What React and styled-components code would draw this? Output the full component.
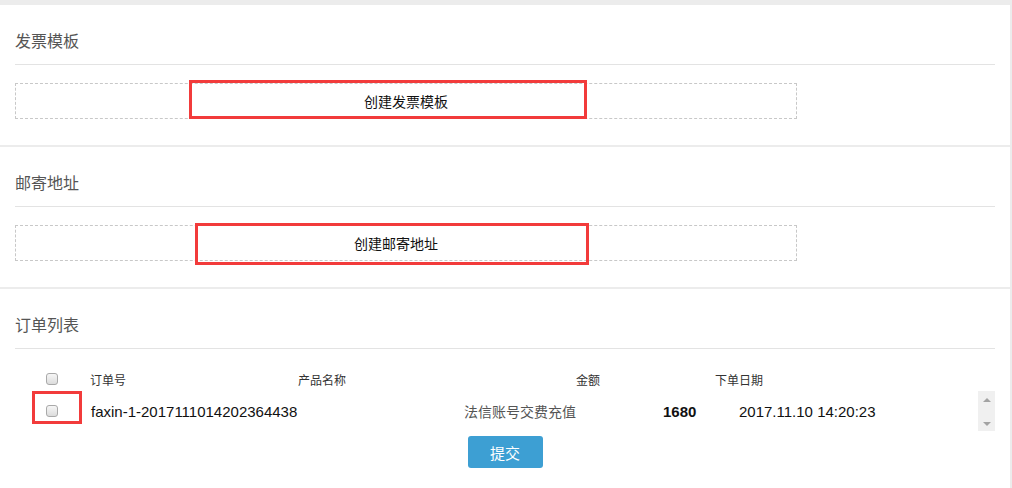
import React from 'react'
import styled, { createGlobalStyle } from 'styled-components'

const GlobalStyle = createGlobalStyle`
  html, body {
    margin: 0;
    padding: 0;
    background: #ececec;
    font-family: "Liberation Sans", "Noto Sans CJK SC", sans-serif;
  }
`

const Page = styled.div`
  width: 1010px;
  padding-top: 5px;
  display: flex;
  flex-direction: column;
  gap: 2px;
`

const Panel = styled.section`
  background: #fff;
  padding: 0 15px;
  height: ${props => props.$height}px;
  box-sizing: border-box;
`

const Title = styled.h3`
  margin: 0;
  padding: 26px 0 11px;
  line-height: 22px;
  font-size: 16px;
  font-weight: normal;
  color: #555;
  border-bottom: 1px solid #e3e3e3;
`

const DashedBox = styled.div`
  position: relative;
  margin-top: 18px;
  width: 782px;
  height: 36px;
  box-sizing: border-box;
  border: 1px dashed #c8c8c8;
  display: flex;
  align-items: center;
  justify-content: center;
  padding-right: ${props => props.$shift || 0}px;
  font-size: 14px;
  color: #111;
`

const Mark = styled.div`
  position: absolute;
  box-sizing: border-box;
  border: 3px solid #f23b3b;
  left: ${props => props.$left}px;
  top: ${props => props.$top}px;
  width: ${props => props.$width}px;
  height: ${props => props.$height}px;
  pointer-events: none;
`

const HeadRow = styled.div`
  margin-top: 20px;
  height: 20px;
  display: flex;
  align-items: center;
  font-size: 12px;
  color: #333;
`

const Cell = styled.div`
  width: ${props => props.$w}px;
  flex: none;
  display: flex;
  align-items: center;
  font-size: ${props => props.$size || 'inherit'};
  font-weight: ${props => (props.$bold ? 'bold' : 'normal')};
  color: ${props => props.$color || 'inherit'};
  white-space: nowrap;
`

const Box = styled.span`
  display: inline-block;
  width: 12px;
  height: 12px;
  box-sizing: border-box;
  border: 1px solid #a9a9a9;
  border-radius: 3px;
  background: linear-gradient(#f6f6f6, #dcdcdc);
  margin-left: ${props => props.$ml}px;
`

const Scroller = styled.div`
  position: relative;
  margin-top: 2px;
  height: 40px;
  display: flex;
  align-items: center;
`

const DataRow = styled.div`
  flex: 1;
  display: flex;
  align-items: center;
  font-size: 15px;
  color: #111;
`

const ScrollBar = styled.div`
  width: 17px;
  height: 40px;
  background: #f0f0f0;
  display: flex;
  flex-direction: column;
  justify-content: space-between;
  align-items: center;
  padding: 7px 0 5px;
  box-sizing: border-box;
`

const Arrow = styled.span`
  width: 0;
  height: 0;
  border-left: 4px solid transparent;
  border-right: 4px solid transparent;
  ${props =>
    props.$down
      ? 'border-top: 4px solid #a3a3a3;'
      : 'border-bottom: 4px solid #a3a3a3;'}
`

const Actions = styled.div`
  margin-top: 5px;
  display: flex;
  justify-content: center;
`

const Submit = styled.button`
  width: 75px;
  height: 32px;
  border: none;
  border-radius: 3px;
  background: #3d9fd3;
  color: #fff;
  font-size: 15px;
  font-family: inherit;
  padding: 0;
`

const App = () => {
  return (
    <Page>
      <GlobalStyle />
      <Panel $height={140}>
        <Title>发票模板</Title>
        <DashedBox>
          创建发票模板
          <Mark $left={173} $top={-4} $width={398} $height={39} />
        </DashedBox>
      </Panel>

      <Panel $height={140}>
        <Title>邮寄地址</Title>
        <DashedBox $shift={20}>
          创建邮寄地址
          <Mark $left={179} $top={-3} $width={394} $height={42} />
        </DashedBox>
      </Panel>

      <Panel $height={199}>
        <Title>订单列表</Title>
        <HeadRow>
          <Cell $w={75}>
            <Box $ml={31} />
          </Cell>
          <Cell $w={208}>订单号</Cell>
          <Cell $w={278}>产品名称</Cell>
          <Cell $w={139}>金额</Cell>
          <Cell $w={80}>下单日期</Cell>
        </HeadRow>
        <Scroller>
          <DataRow>
            <Cell $w={76}>
              <Box $ml={31} />
            </Cell>
            <Cell $w={373}>faxin-1-2017111014202364438</Cell>
            <Cell $w={199} $size="14px" $color="#555">
              法信账号交费充值
            </Cell>
            <Cell $w={76} $bold>
              1680
            </Cell>
            <Cell $w={140}>2017.11.10 14:20:23</Cell>
          </DataRow>
          <ScrollBar>
            <Arrow />
            <Arrow $down />
          </ScrollBar>
          <Mark $left={17} $top={0} $width={50} $height={33} />
        </Scroller>
        <Actions>
          <Submit>提交</Submit>
        </Actions>
      </Panel>
    </Page>
  )
}

export default App
